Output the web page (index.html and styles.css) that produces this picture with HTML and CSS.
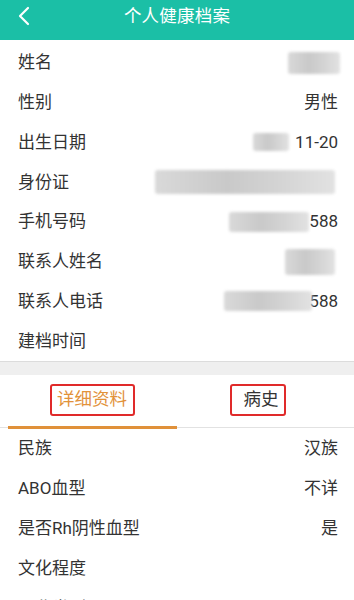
FILE: index.html
```html
<!DOCTYPE html>
<html lang="zh">
<head>
<meta charset="utf-8">
<link rel="stylesheet" href="styles.css">
</head>
<body>
<div class="page">
  <header class="topbar">
    <svg class="back" width="14" height="20" viewBox="0 0 14 20"><path d="M11 2 L3 10 L11 18" fill="none" stroke="#fff" stroke-width="2.2" stroke-linecap="round" stroke-linejoin="round"/></svg>
    <h1 class="title">个人健康档案</h1>
  </header>

  <section class="list top-list">
    <div class="row"><span class="label">姓名</span><span class="value"><span class="blur blur-name"></span></span></div>
    <div class="row"><span class="label">性别</span><span class="value">男性</span></div>
    <div class="row"><span class="label">出生日期</span><span class="value"><span class="blur blur-date"></span>11-20</span></div>
    <div class="row"><span class="label">身份证</span><span class="value"><span class="blur blur-id"></span></span></div>
    <div class="row"><span class="label">手机号码</span><span class="value"><span class="blur blur-phone"></span>588</span></div>
    <div class="row"><span class="label">联系人姓名</span><span class="value"><span class="blur blur-name2"></span></span></div>
    <div class="row"><span class="label">联系人电话</span><span class="value"><span class="blur blur-phone2"></span>588</span></div>
    <div class="row"><span class="label">建档时间</span><span class="value"></span></div>
  </section>

  <div class="gap"></div>

  <nav class="tabs">
    <div class="tab active"><span class="mark mark-a">详细资料</span></div>
    <div class="tab"><span class="mark mark-b">病史</span></div>
  </nav>

  <section class="list bottom-list">
    <div class="row"><span class="label">民族</span><span class="value">汉族</span></div>
    <div class="row"><span class="label">ABO血型</span><span class="value">不详</span></div>
    <div class="row"><span class="label">是否Rh阴性血型</span><span class="value">是</span></div>
    <div class="row"><span class="label">文化程度</span><span class="value"></span></div>
    <div class="row"><span class="label">职业类别</span><span class="value"></span></div>
  </section>
</div>
</body>
</html>
```

FILE: styles.css
```css
* { box-sizing: border-box; margin: 0; padding: 0; }
html, body { background: #fff; }
body {
  width: 354px;
  height: 600px;
  overflow: hidden;
  font-family: Roboto, "Noto Sans CJK SC", sans-serif;
  color: #333;
}
.page { display: flex; flex-direction: column; }

.topbar {
  height: 40px;
  background: #1bbfa6;
  display: flex;
  align-items: center;
  justify-content: center;
  padding-bottom: 7px;
  position: relative;
}
.back { position: absolute; left: 17px; top: 6px; }
.title {
  font-size: 17.5px;
  font-weight: 400;
  color: #fff;
  line-height: 1;
  letter-spacing: 0.2px;
}

.list { display: flex; flex-direction: column; padding: 0 16px 0 18px; }
.top-list { padding-top: 3px; }
.row {
  height: 39.75px;
  display: flex;
  align-items: center;
  justify-content: space-between;
  font-size: 17px;
  line-height: 1;
}
.label { color: #333; }
.value { color: #333; display: flex; align-items: center; }

.blur {
  display: inline-block;
  background: linear-gradient(90deg, #d9d9d9, #c9c9c9 40%, #d4d4d4 70%, #e2e2e2);
  filter: blur(1.6px);
  border-radius: 3px;
}
.blur-name { width: 52px; height: 22px; margin-right: -2px; }
.blur-date { width: 36px; height: 18px; margin-right: 6px; }
.blur-id { width: 180px; height: 24px; margin-right: 3px; }
.blur-phone { width: 80px; height: 20px; margin-right: 0px; }
.blur-name2 { width: 50px; height: 26px; margin-right: 3px; }
.blur-phone2 { width: 88px; height: 20px; margin-right: -3px; }

.gap {
  height: 14px;
  background: #efefef;
  border-top: 1px solid #dcdcdc;
}

.tabs {
  display: flex;
  height: 53px;
  padding: 0 8px;
  border-bottom: 1px solid #e2e2e2;
}
.tab {
  flex: 1;
  display: flex;
  align-items: center;
  justify-content: center;
  position: relative;
  font-size: 17.5px;
  color: #333;
  padding-bottom: 2px;
}
.tab.active { color: #e2923a; }
.tab.active::after {
  content: "";
  position: absolute;
  left: 0;
  right: 0;
  bottom: -2px;
  height: 3px;
  background: #e0913a;
}
.mark {
  border: 2px solid #e02a2a;
  border-radius: 3px;
  line-height: 1;
}
.mark-a { padding: 5px 6px 5px 5px; }
.mark-b { padding: 5px 5px 5px 12px; margin-left: -8px; }

.bottom-list { padding-top: 0; }
.bottom-list .row { height: 40px; }
```
